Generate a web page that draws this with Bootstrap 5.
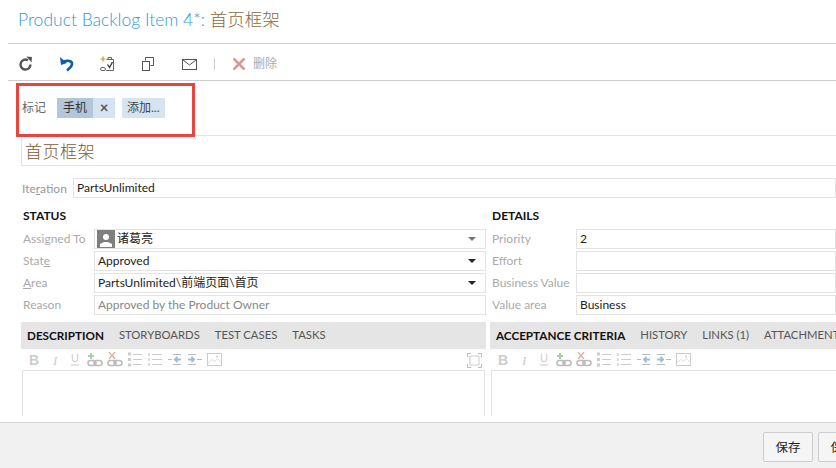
<!DOCTYPE html>
<html lang="zh">
<head>
    <meta charset="UTF-8">
    <meta name="viewport" content="width=device-width, initial-scale=1.0">
    <title>Product Backlog Item 4</title>
    <link href="https://cdn.jsdelivr.net/npm/bootstrap@5.3.0/dist/css/bootstrap.min.css" rel="stylesheet">
    <style>
        html, body { height: 100%; overflow: hidden; }
        body { font-family: Lato, "Noto Sans CJK SC", sans-serif; font-size: 12px; color: #222; background: #fff; }
        .shot { width: 836px; height: 468px; position: relative; overflow: hidden; }
        .head-title { height: 44px; margin-left: 8px; padding: 8px 0 0 10px; border-bottom: 1px solid #ccc; font-size: 17.500px; font-weight: 300; line-height: 24px; color: #3498da; white-space: nowrap; }
        .head-title span { color: #8a6a3a; }
        .tool-row { height: 37px; margin-left: 8px; padding: 4px 0 0 10px; border-bottom: 1px solid #ccc; }
        .tool-btn { width: 41px; height: 20px; display: flex; align-items: center; }
        .tool-sep { width: 1px; height: 12px; background: #ccc; margin: 0 17px 0 -9px; }
        .tool-del { color: #aaa; gap: 7px; }
        .tag-row { height: 54px; padding-left: 22px; color: #666; gap: 11px; }
        .tag-name { background: #b3c7d8; padding: 0 6px; height: 20px; line-height: 20px; color: #333; }
        .tag-x { background: #d5e4f0; width: 22px; height: 20px; line-height: 19px; text-align: center; color: #555; font-size: 15px; font-weight: 700; margin-right: 7px; }
        .tag-add { background: #d5e4f0; padding: 0 5px; height: 20px; line-height: 20px; color: #444; }
        .red-box { position: absolute; left: 16px; top: 83px; width: 179px; height: 54px; border: 3px solid #e8453f; }
        .title-field { height: 31px; margin-left: 21px; padding-left: 3px; border: 1px solid #e3e3e3; border-right: 0; font-size: 17px; line-height: 29px; color: #7a5a30; margin-bottom: 12px; letter-spacing: .5px; font-family: "Noto Sans CJK SC", sans-serif; font-weight: 300; }
        .iter-row { height: 21px; padding-left: 22px; margin-bottom: 9px; }
        .iter-row .lab { width: 51px; color: #999; line-height: 21px; }
        .box-in { height: 20px; line-height: 18px; border: 1px solid #e3e3e3; padding-left: 3px; flex: 1 1 auto; white-space: nowrap; position: relative; min-width: 0; }
        .cols { gap: 6px; margin-bottom: 5px; }
        .col-l { width: 463px; margin-left: 23px; flex: none; }
        .col-r { flex: 1 1 auto; min-width: 0; }
        .sec-head { height: 19px; line-height: 16px; font-weight: 700; color: #111; margin-bottom: 2px; }
        .f-row { height: 20px; margin-bottom: 2px; }
        .col-l .f-lab { width: 71px; }
        .col-r .f-lab { width: 84px; }
        .f-lab { color: #aaa; flex: none; white-space: nowrap; line-height: 20px; }
        .drop-arrow { position: absolute; right: 9px; top: 7px; width: 0; height: 0; border-left: 4px solid transparent; border-right: 4px solid transparent; border-top: 4px solid #222; }
        .drop-arrow.dim { border-top-color: #777; }
        .muted-val { color: #888; }
        .avatar { width: 18px; height: 18px; background: #7f7f7f; display: inline-block; vertical-align: top; margin-left: -1px; margin-right: 2px; }
        .edit-wrap { gap: 4px; margin-left: 21px; height: 100px; }
        .edit-l { width: 465px; flex: none; position: relative; }
        .edit-r { flex: 1 1 auto; min-width: 0; }
        .tab-bar { height: 27px; background: #e5e5e5; padding-left: 6px; gap: 15px; color: #555; font-size: 11.300px; white-space: nowrap; overflow: hidden; }
        .tab-bar b { color: #111; font-size: 11.700px; font-weight: 700; }
        .ed-tools { height: 21px; padding-left: 6px; gap: 4px; }
        .ed-tools svg { flex: none; }
        .ed-area { height: 46px; margin: 0 1px; border: 1px solid #e3e3e3; border-bottom: 0; }
        .edit-r .ed-area { border-right: 0; margin-right: 0; }
        .expand-ico { position: absolute; right: 4px; top: 31px; }
        .foot-bar { position: absolute; left: 0; right: 0; top: 422px; bottom: 0; background: #f1f1f1; border-top: 1px solid #d9d9d9; gap: 5px; padding: 9px 0 0 763px; }
        .foot-btn { width: 50px; height: 30px; flex: none; border: 1px solid #ccc; border-radius: 2px; background: #f5f5f5; color: #222; font-size: 12.500px; padding: 2px 0 0; line-height: 26px; text-align: center; }
    </style>
</head>
<body>
<div class="shot">
    <div class="head-title">Product Backlog Item 4*: <span>首页框架</span></div>

    <div class="tool-row d-flex align-items-center">
        <div class="tool-btn"><svg width="16" height="16" viewBox="0 0 16 16"><path d="M12.500 8.500a5 5 0 1 1-2.500-4.300" fill="none" stroke="#555" stroke-width="2.400"/><path d="M8.500 .5l5.500 .5-.5 5.500z" fill="#555"/></svg></div>
        <div class="tool-btn"><svg width="16" height="16" viewBox="0 0 16 16"><path d="M3 6.500c3-2.500 9-2.500 10 .5 .7 2.500-2 5-5 7.500" fill="none" stroke="#0b5ea8" stroke-width="2.600"/><path d="M1 1l1 8 6-2z" fill="#0b5ea8"/></svg></div>
        <div class="tool-btn"><svg width="16" height="16" viewBox="0 0 16 16"><path d="M6.500 3.500h7v11H6" fill="none" stroke="#666"/><path d="M8 1.500h3.500v2H8z" fill="none" stroke="#666"/><path d="M7.500 8.500l2 3 3-5.500" fill="none" stroke="#333" stroke-width="1.300"/><path d="M3 .5v5M.5 3h5" stroke="#d9901a" stroke-width="1.200"/><rect x=".5" y="11.500" width="5" height="3" rx="1.500" fill="none" stroke="#666"/></svg></div>
        <div class="tool-btn"><svg width="14" height="16" viewBox="0 0 14 16"><path d="M4.500 4.500V1.500h8v8h-3" fill="none" stroke="#555"/><rect x="1.500" y="5.500" width="7" height="9" fill="none" stroke="#555"/></svg></div>
        <div class="tool-btn"><svg width="15" height="11" viewBox="0 0 15 11"><rect x=".5" y=".5" width="14" height="10" fill="none" stroke="#555"/><path d="M1 1l6.500 5L14 1" fill="none" stroke="#555"/></svg></div>
        <div class="tool-sep"></div>
        <div class="d-flex align-items-center tool-del"><svg width="14" height="14" viewBox="0 0 14 14"><path d="M1.500 1.500l11 11M12.500 1.500l-11 11" stroke="#d99a94" stroke-width="2.600"/></svg><span>删除</span></div>
    </div>

    <div class="tag-row d-flex align-items-center">
        <span>标记</span>
        <div class="d-flex">
            <span class="tag-name">手机</span><span class="tag-x">×</span><span class="tag-add">添加...</span>
        </div>
    </div>
    <div class="red-box"></div>

    <div class="title-field">首页框架</div>

    <div class="iter-row d-flex">
        <div class="lab">Ite<u>r</u>ation</div>
        <div class="box-in">PartsUnlimited</div>
    </div>

    <div class="cols d-flex">
        <div class="col-l">
            <div class="sec-head">STATUS</div>
            <div class="f-row d-flex"><div class="f-lab">Assigned To</div><div class="box-in"><span class="avatar"><svg width="18" height="18" viewBox="0 0 18 18"><circle cx="9" cy="6" r="3" fill="#fff"/><path d="M3 16v-3l4-2h4l4 2v3z" fill="#fff"/></svg></span>诸葛亮<i class="drop-arrow dim"></i></div></div>
            <div class="f-row d-flex"><div class="f-lab">Stat<u>e</u></div><div class="box-in">Approved<i class="drop-arrow"></i></div></div>
            <div class="f-row d-flex"><div class="f-lab"><u>A</u>rea</div><div class="box-in">PartsUnlimited\前端页面\首页<i class="drop-arrow"></i></div></div>
            <div class="f-row d-flex"><div class="f-lab">Reason</div><div class="box-in muted-val">Approved by the Product Owner</div></div>
        </div>
        <div class="col-r">
            <div class="sec-head">DETAILS</div>
            <div class="f-row d-flex"><div class="f-lab">Priority</div><div class="box-in">2</div></div>
            <div class="f-row d-flex"><div class="f-lab">Effort</div><div class="box-in"></div></div>
            <div class="f-row d-flex"><div class="f-lab">Business Value</div><div class="box-in"></div></div>
            <div class="f-row d-flex"><div class="f-lab">Value area</div><div class="box-in">Business</div></div>
        </div>
    </div>

    <div class="edit-wrap d-flex">
        <div class="edit-l">
            <div class="tab-bar d-flex align-items-center"><b>DESCRIPTION</b><span>STORYBOARDS</span><span>TEST CASES</span><span>TASKS</span></div>
            <div class="ed-tools d-flex align-items-center" id="tools-a"></div>
            <div class="ed-area"></div>
            <svg class="expand-ico" width="15" height="15" viewBox="0 0 15 15"><path d="M.5 4V.5H4M11 .5h3.500V4M14.500 11v3.500H11M4 14.500H.5V11" fill="none" stroke="#bbb"/><rect x="3" y="3" width="9" height="9" fill="none" stroke="#ccc"/></svg>
        </div>
        <div class="edit-r">
            <div class="tab-bar d-flex align-items-center"><b>ACCEPTANCE CRITERIA</b><span>HISTORY</span><span>LINKS (1)</span><span>ATTACHMENTS</span></div>
            <div class="ed-tools d-flex align-items-center" id="tools-b"></div>
            <div class="ed-area"></div>
        </div>
    </div>

    <div class="foot-bar d-flex">
        <button class="foot-btn" type="button">保存</button>
        <button class="foot-btn" type="button">保存</button>
    </div>
</div>

<script src="https://cdn.jsdelivr.net/npm/bootstrap@5.3.0/dist/js/bootstrap.bundle.min.js"></script>
<script>
    // same editor toolbar twice, so keep the icons in one place
    const edIcons = [
        '<text x="2" y="13" font-size="14" font-weight="700" font-family="Liberation Sans" fill="#ccc">B</text>',
        '<text x="6" y="13" font-size="13" font-style="italic" font-family="Liberation Serif" fill="#ccc">I</text>',
        '<text x="4" y="10" font-size="11" font-family="Liberation Sans" fill="#ccc">U</text><path d="M4 13h8" stroke="#ccc"/>',
        '<path d="M4 1v6M1 4h6" stroke="#a5cfa5" stroke-width="2"/><rect x="1" y="8.500" width="8" height="5" rx="2.500" fill="none" stroke="#bbb" stroke-width="1.600"/><rect x="7" y="8.500" width="8" height="5" rx="2.500" fill="none" stroke="#bbb" stroke-width="1.600"/>',
        '<path d="M2 0l6 7M8 0L2 7" stroke="#e0a9a0" stroke-width="1.200"/><rect x="1" y="8.500" width="8" height="5" rx="2.500" fill="none" stroke="#bbb" stroke-width="1.600"/><rect x="7" y="8.500" width="8" height="5" rx="2.500" fill="none" stroke="#bbb" stroke-width="1.600"/>',
        '<path d="M1 2h3M1 7.500h3M1 13h3" stroke="#ccc" stroke-width="3"/><path d="M6 2.500h9M6 7.500h9M6 12.500h9" stroke="#ccc"/>',
        '<path d="M2 1v3M2 6v3M2 11v3" stroke="#bbb"/><path d="M5 2.500h10M5 7.500h10M5 12.500h10" stroke="#ccc"/>',
        '<path d="M1 7.500h4M6 2.500h8M6 12.500h8" stroke="#bbb" stroke-width="1.200"/><path d="M14 7.500H8M10.500 5L8 7.500l2.500 2.500" stroke="#9dbedb" stroke-width="2" fill="none"/>',
        '<path d="M10 7.500h5M1 2.500h8M1 12.500h8" stroke="#bbb" stroke-width="1.200"/><path d="M1 7.500h6M4.500 5L7 7.500 4.500 10" stroke="#9dbedb" stroke-width="2" fill="none"/>',
        '<rect x=".5" y="1.500" width="14" height="12" fill="none" stroke="#ccc"/><path d="M1 11l3.500-3.500 3 2 3-3 3.500 3.500" fill="none" stroke="#ddd"/><circle cx="10" cy="4.500" r="1" fill="#ccc"/>'
    ];
    ['tools-a', 'tools-b'].forEach(id => {
        document.getElementById(id).innerHTML = edIcons.map(i => `<svg width="16" height="15" viewBox="0 0 16 15">${i}</svg>`).join('');
    });
</script>
</body>
</html>
